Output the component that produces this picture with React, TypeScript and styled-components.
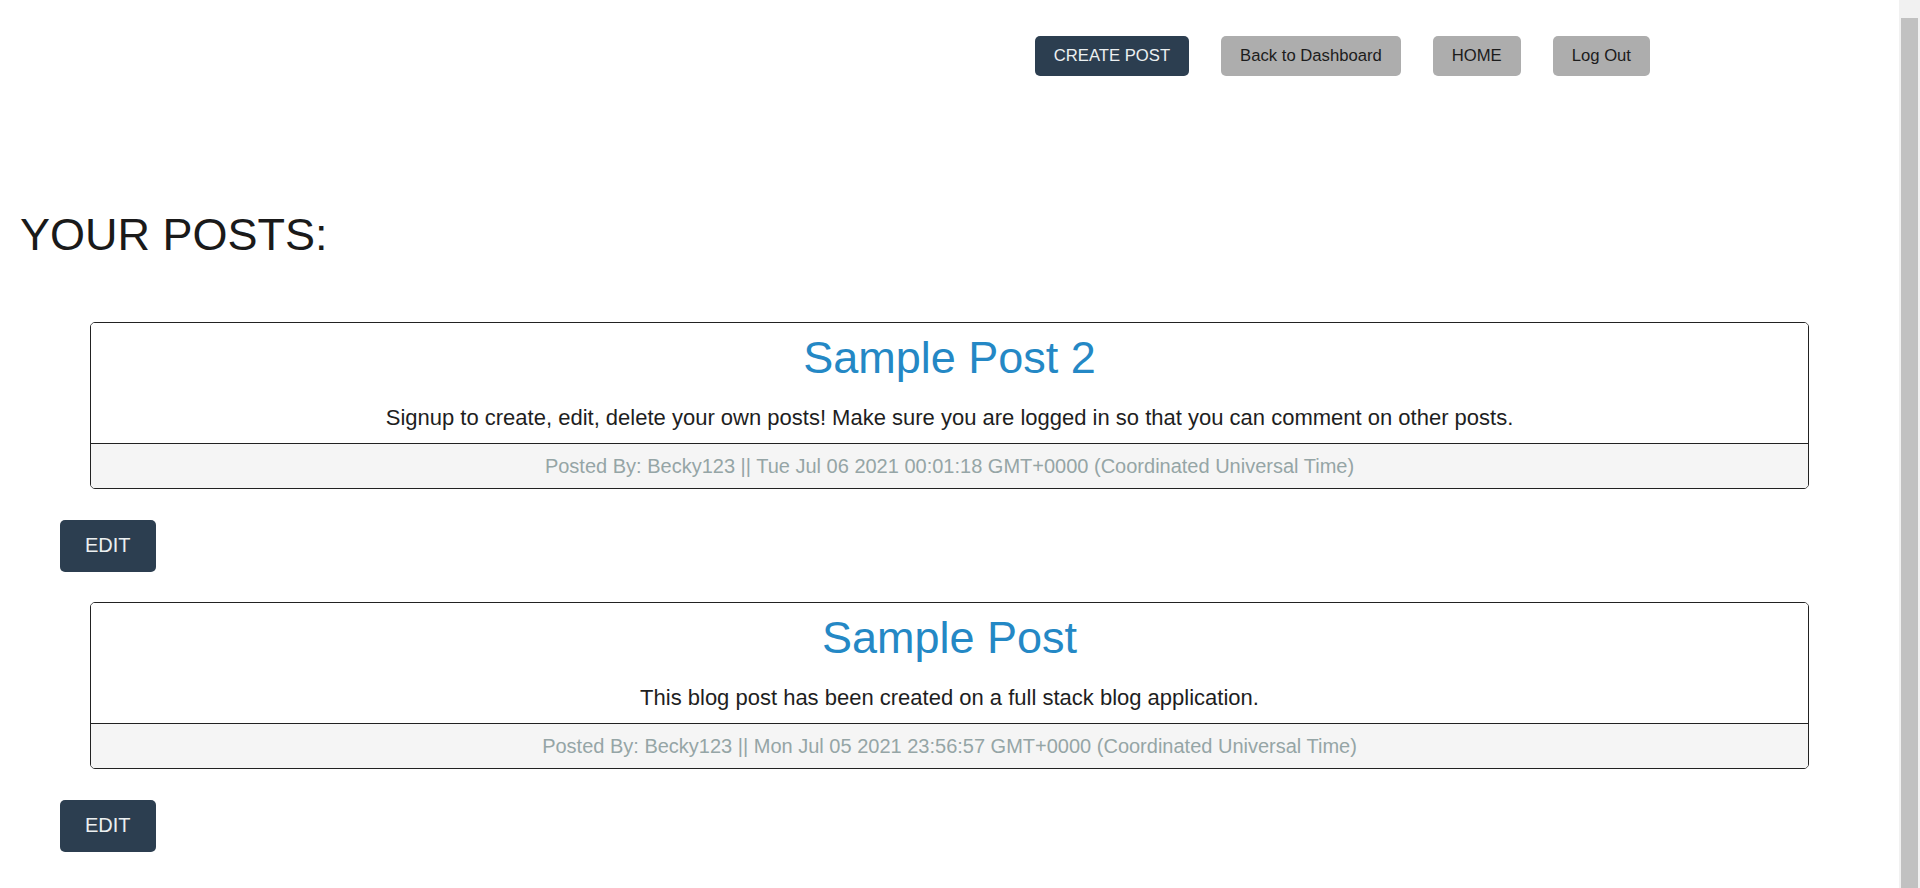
import React from "react";
import styled, { createGlobalStyle } from "styled-components";

const GlobalStyle = createGlobalStyle`
  html, body {
    margin: 0;
    padding: 0;
    background: #ffffff;
  }
  body {
    font-family: "Liberation Sans", Arial, sans-serif;
    color: #1f1f1f;
  }
  ::-webkit-scrollbar {
    width: 0;
  }
`;

const Frame = styled.div`
  display: flex;
  align-items: flex-start;
`;

const Page = styled.div`
  flex: 1;
  display: flex;
  flex-direction: column;
  padding-bottom: 40px;
  margin-right: 21px;
`;

const ScrollTrack = styled.div`
  position: fixed;
  top: 0;
  right: 0;
  width: 21px;
  height: 100vh;
  background: #f1f1f1;
  display: flex;
  flex-direction: column;
  padding: 18px 2px 0 2px;
  box-sizing: border-box;
`;

const ScrollThumb = styled.div`
  flex: 1;
  background: #c1c1c1;
`;

const Nav = styled.nav`
  display: flex;
  justify-content: flex-end;
  gap: 32px;
  padding: 36px 249px 0 0;
`;

const NavButton = styled.button<{ $primary?: boolean }>`
  font-family: "Liberation Sans", Arial, sans-serif;
  font-size: 16.67px;
  line-height: normal;
  padding: 10px 19px;
  border: none;
  border-radius: 5px;
  cursor: pointer;
  background: ${(p) => (p.$primary ? "#2c3e50" : "#adadad")};
  color: ${(p) => (p.$primary ? "#ecf0f1" : "#1c1c1c")};
`;

const Heading = styled.h1`
  margin: 133px 0 0 20px;
  font-size: 45px;
  font-weight: 400;
  line-height: normal;
  color: #1a1a1a;
`;

const PostList = styled.section`
  display: flex;
  flex-direction: column;
  margin-top: 61px;
`;

const PostItem = styled.article`
  display: flex;
  flex-direction: column;
  align-items: flex-start;
  margin-bottom: 30px;
`;

const Card = styled.div`
  align-self: stretch;
  margin: 0 90px;
  border: 1px solid #222;
  border-radius: 5px;
  overflow: hidden;
  text-align: center;
`;

const CardBody = styled.div`
  padding: 9px 20px 12px;
  background: #ffffff;
`;

const PostTitle = styled.h2`
  margin: 0;
  font-size: 45px;
  font-weight: 400;
  line-height: normal;
  color: #2488c5;
`;

const PostText = styled.p`
  margin: 21px 0 0;
  font-size: 22px;
  line-height: normal;
  color: #1e1e1e;
`;

const CardFooter = styled.div`
  border-top: 1px solid #222;
  background: #f5f5f5;
  padding: 11px 20px 10px;
  font-size: 20px;
  line-height: normal;
  color: #95a5a6;
`;

const EditButton = styled.button`
  margin: 31px 0 0 60px;
  font-family: "Liberation Sans", Arial, sans-serif;
  font-size: 20px;
  line-height: normal;
  padding: 14px 25px 15px;
  border: none;
  border-radius: 5px;
  background: #2c3e50;
  color: #ecf0f1;
  cursor: pointer;
`;

const posts = [
  {
    title: "Sample Post 2",
    text: "Signup to create, edit, delete your own posts! Make sure you are logged in so that you can comment on other posts.",
    author: "Becky123",
    date: "Tue Jul 06 2021 00:01:18 GMT+0000 (Coordinated Universal Time)",
  },
  {
    title: "Sample Post",
    text: "This blog post has been created on a full stack blog application.",
    author: "Becky123",
    date: "Mon Jul 05 2021 23:56:57 GMT+0000 (Coordinated Universal Time)",
  },
];

export default function App() {
  return (
    <>
      <GlobalStyle />
      <Frame>
        <Page>
          <Nav>
            <NavButton $primary>CREATE POST</NavButton>
            <NavButton>Back to Dashboard</NavButton>
            <NavButton>HOME</NavButton>
            <NavButton>Log Out</NavButton>
          </Nav>
          <Heading>YOUR POSTS:</Heading>
          <PostList>
            {posts.map((post) => (
              <PostItem key={post.title}>
                <Card>
                  <CardBody>
                    <PostTitle>{post.title}</PostTitle>
                    <PostText>{post.text}</PostText>
                  </CardBody>
                  <CardFooter>
                    Posted By: {post.author} || {post.date}
                  </CardFooter>
                </Card>
                <EditButton>EDIT</EditButton>
              </PostItem>
            ))}
          </PostList>
        </Page>
        <ScrollTrack aria-hidden="true">
          <ScrollThumb />
        </ScrollTrack>
      </Frame>
    </>
  );
}
